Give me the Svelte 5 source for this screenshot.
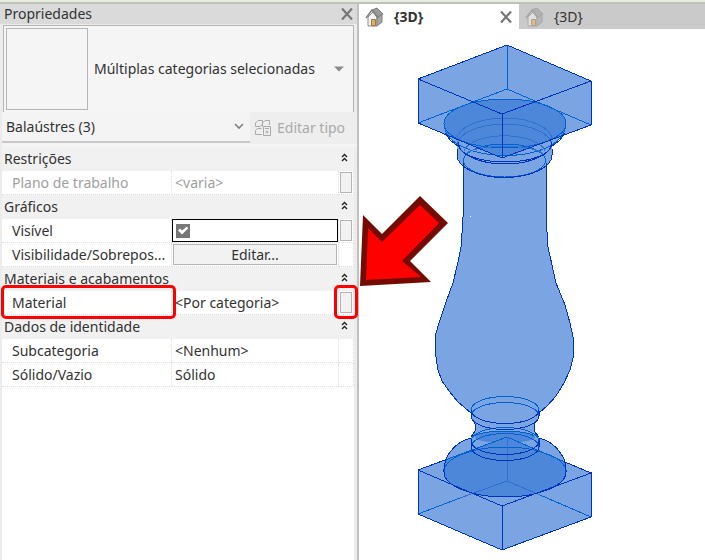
<script lang="ts">
    type Row = {
        name: string;
        value: string;
        kind?: "text" | "check" | "button";
        side?: boolean;
        muted?: boolean;
        marked?: boolean;
    };

    type Group = { title: string; rows: Row[] };

    const groups: Group[] = [
        {
            title: "Restrições",
            rows: [{ name: "Plano de trabalho", value: "<varia>", side: true, muted: true }],
        },
        {
            title: "Gráficos",
            rows: [
                { name: "Visível", value: "", kind: "check", side: true },
                { name: "Visibilidade/Sobrepos...", value: "Editar...", kind: "button" },
            ],
        },
        {
            title: "Materiais e acabamentos",
            rows: [{ name: "Material", value: "<Por categoria>", side: true, marked: true }],
        },
        {
            title: "Dados de identidade",
            rows: [
                { name: "Subcategoria", value: "<Nenhum>" },
                { name: "Sólido/Vazio", value: "Sólido" },
            ],
        },
    ];

    let visible = $state(true);
    let closed: Record<string, boolean> = $state({});

    function toggle(title: string): void {
        closed[title] = !closed[title];
    }
</script>

{#snippet cross()}
    <svg width="12" height="12" viewBox="0 0 12 12" aria-hidden="true">
        <path d="M1 0.500 L11 11.500 M11 0.500 L1 11.500" stroke="#777" stroke-width="2.200" />
    </svg>
{/snippet}

{#snippet house()}
    <svg width="20" height="20" viewBox="0 0 20 20" aria-hidden="true">
        <path d="M3 10 L8 5 L12 10 V19 H3 Z" fill="#f4f4f4" stroke="#8a8a8a" />
        <path d="M12 10 L17 7 V15 L12 19 Z" fill="#a6a6a6" stroke="#808080" />
        <path d="M7 3 L12 1 L18 7 L13 10 Z" fill="#9a9a9a" stroke="#808080" />
        <path d="M1 11 L7 3 L13 11" fill="none" stroke="#808080" stroke-width="1.500" />
        <path d="M6.500 18.500 V12.500 H10.500 V18.500 Z" fill="#f0b040" stroke="#8a7a60" />
    </svg>
{/snippet}

<div class="app">
    <section class="properties">
        <header>
            <h1>Propriedades</h1>
            <button class="close" aria-label="Fechar propriedades">{@render cross()}</button>
        </header>

        <div class="type-selector">
            <div class="preview"></div>
            <select aria-label="Tipo">
                <option>Múltiplas categorias selecionadas</option>
            </select>
            <svg class="caret" width="10" height="6" viewBox="0 0 10 6" aria-hidden="true">
                <path d="M0 0.500 H10 L5 5.500 Z" fill="#8b8b8b" />
            </svg>
        </div>

        <div class="filter">
            <div class="combo">
                <select aria-label="Filtro">
                    <option>Balaústres (3)</option>
                </select>
                <svg width="10" height="7" viewBox="0 0 10 7" aria-hidden="true">
                    <path d="M1 1 L5 5 L9 1" fill="none" stroke="#808080" stroke-width="1.600" />
                </svg>
            </div>
            <button class="edit-type" disabled>
                <svg width="17" height="17" viewBox="0 0 17 17" fill="none" stroke="#aaa" aria-hidden="true">
                    <path d="M0.500 6.500 V3 L3 0.500 H7.500 V4 L5.500 6.500 Z M7.500 4 V3 L10 0.500 H14.500 V5 M7.500 4 V6.500 M0.500 14.500 V10.500 L2.500 8.500 H6.500 M0.500 14.500 H7" />
                    <path d="M8.500 6.500 H15.500 V15.500 H8.500 Z M10 8.500 H14 M10.500 12 H13.500 M12 10.500 V13.500" />
                </svg>
                <span>Editar tipo</span>
            </button>
        </div>

        <div class="grid">
            <table>
                <colgroup>
                    <col class="col-name" />
                    <col />
                    <col class="col-side" />
                </colgroup>
                {#each groups as group (group.title)}
                    <tbody>
                        <tr class="group">
                            <th colspan="3" scope="rowgroup">
                                <div class="group-head">
                                    <span>{group.title}</span>
                                    <button aria-label={group.title} onclick={() => toggle(group.title)}>
                                        <svg width="7" height="9" viewBox="0 0 7 9" aria-hidden="true">
                                            <path d="M1 4 L3.500 1.500 L6 4 M1 8 L3.500 5.500 L6 8" fill="none" stroke="#222" stroke-width="1.400" />
                                        </svg>
                                    </button>
                                </div>
                            </th>
                        </tr>
                        {#if !closed[group.title]}
                            {#each group.rows as row (row.name)}
                                <tr class:muted={row.muted}>
                                    <th class="name" class:marked={row.marked} scope="row">{row.name}</th>
                                    {#if row.kind === "check"}
                                        <td class="value check">
                                            <label>
                                                <input type="checkbox" aria-label={row.name} bind:checked={visible} />
                                            </label>
                                        </td>
                                    {:else if row.kind === "button"}
                                        <td class="value action"><button>{row.value}</button></td>
                                    {:else}
                                        <td class="value">{row.value}</td>
                                    {/if}
                                    <td class="side" class:marked={row.marked}>
                                        {#if row.side}
                                            <button aria-label="Associar {row.name}"></button>
                                        {/if}
                                    </td>
                                </tr>
                            {/each}
                        {/if}
                    </tbody>
                {/each}
            </table>
        </div>
    </section>

    <main>
        <nav>
            <div class="tab active">
                <button class="tab-label">{@render house()}<span>{"{3D}"}</span></button>
                <button class="close" aria-label="Fechar vista">{@render cross()}</button>
            </div>
            <div class="tab">
                <button class="tab-label">{@render house()}<span>{"{3D}"}</span></button>
            </div>
        </nav>

        <svg class="view" viewBox="359 29 346 531" role="img" aria-label="Balaústre">
            <defs>
                <clipPath id="cap">
                    <path d="M418 79 L507 45 L591 81 V125 L502 158 L418 123 Z" />
                </clipPath>
                <clipPath id="plinth">
                    <path d="M418 470 L507 437 L591 473 V517 L502 550 L418 514 Z" />
                </clipPath>
            </defs>

            <!-- solids -->
            <g fill="#7ba4e2">
                <path d="M418 79 L507 45 L591 81 V125 L502 158 L418 123 Z" />
                <path d="M418 470 L507 437 L591 473 V517 L502 550 L418 514 Z" />
                <path d="M444 124 Q444 133 457 146 V155 Q458 162 463 166 V217 L462 233 L461 247 L458 262 L453 283 L446 302 L440 320 L436 333 L435 345 L436 357 L438 370 L442 381 L449 391 L458 402 L471 413 V417 L475 424 V431 L471 438 C458 441 443 454 444 472 A61 25 0 0 0 566 472 C567 454 552 441 539 438 L534 431 V424 L539 417 V413 L547 406 L556 396 L564 383 L570 370 L573 358 L574 347 L573 337 L570 323 L565 305 L556 283 L552 265 L548 247 L546 217 V166 Q551 162 552 155 V146 Q566 133 566 124 Z" />
            </g>
            <g fill="#4c87da">
                <path clip-path="url(#cap)" d="M444 123.500 A61 24.500 0 0 1 566 123.500 Q566 135 550 144 Q532 156 505 156 Q478 156 460 144 Q444 135 444 123.500 Z" />
                <path clip-path="url(#plinth)" d="M444 472 C443 454 458 441 471 438 L480 431 Q505 428 530 431 L539 438 C552 441 567 454 566 472 A61 25 0 0 1 444 472 Z" />
                <ellipse cx="505" cy="437" rx="30" ry="6" />
            </g>

            <!-- hidden edges -->
            <g class="hidden-edge" stroke="#0062d0">
                <path d="M507 45 V89 M418 123 L507 89 L591 125" />
                <path d="M418 514 L460 498 M591 517 L540 495" />
                <ellipse cx="505" cy="123.500" rx="61" ry="24.500" />
                <path d="M444 124 C446 165 563 167 566 124" />
                <ellipse cx="504.500" cy="160.500" rx="41" ry="16.500" />
                <ellipse cx="505" cy="410" rx="34" ry="13.500" />
                <path d="M471 416 A34 13.500 0 0 1 539 416" />
                <path d="M471 441 A34 13.500 0 0 1 539 441 M471 447 A34 13.500 0 0 1 539 447" />
                <path d="M475 436 A30 6 0 0 1 534 436" />
                <path d="M444 472 A61 25 0 0 1 566 472" />
                <path d="M445 460 L507 437 L565 462" />
            </g>
            <g class="hidden-edge" stroke="#2f70d0">
                <path d="M457 140 A47.500 22 0 0 1 552 140" />
                <path d="M457 146 A47.500 22 0 0 1 552 146" />
                <path d="M464 151 A41 18 0 0 1 545 151" />
                <path d="M466 154 A39 9 0 0 1 543 154" />
                <path d="M507 437 V481 M460 498 L507 481 L540 495" />
            </g>

            <!-- visible edges -->
            <g class="edge">
                <path d="M507 45 L591 81 L502 114 L418 79 Z M418 79 V123 L502 158 L591 125 V81 M502 114 V158" />
                <path d="M418 470 L445 460 M591 473 L565 462 M418 470 L502 506 L591 473 V517 L502 550 L418 514 V470 M502 506 V550" />
                <path d="M445 133 L450 140 L459 147 M565 133 L560 140 L551 147" />
                <path d="M459 145 A46 17 0 0 0 551 145" />
                <path d="M458 142 A47 22 0 0 0 552 142" />
                <path d="M457 149 V155 A47.500 22.500 0 0 0 552 155 V149" />
                <path d="M463 163 V217 L462 233 L461 247 L458 262 L453 283 L446 302 L440 320 L436 333 L435 345 L436 357 L438 370 L442 381 L449 391 L458 402 L471 413" />
                <path d="M546 163 V217 L548 247 L552 265 L556 283 L565 305 L570 323 L573 337 L574 347 L573 358 L570 370 L564 383 L556 396 L547 406 L539 413" />
                <path d="M471 410 A34 13.500 0 0 0 539 410 M471 411 V416 A34 13.500 0 0 0 539 416 V411" />
                <path d="M473 420 L475 424 V431 L471 437 M537 420 L534 424 V431 L539 437" />
                <path d="M471 439 V447 A34 13.500 0 0 0 539 447 V439 M471 441 A34 13.500 0 0 0 539 441" />
                <path d="M471 438 C458 441 443 454 444 472 A61 25 0 0 0 566 472 C567 454 552 441 539 438" />
            </g>
            <path d="M470 216 H471 V217 H470 Z" fill="#fff" />

            <!-- callout arrow -->
            <path d="M363 215 L382 234 L420 196 L448 223 L410 261 L431 282 L360 286 Z" fill="#740b00" />
            <path d="M368 228 L382 242 L420 205 L439 223 L402 261 L421 277 L366 280 Z" fill="#f00" />
        </svg>
    </main>
</div>

<style>
    :global(body) {
        margin: 0;
        background: #fff;
    }

    .app {
        display: grid;
        grid-template-columns: minmax(0, 359fr) minmax(0, 346fr);
        box-sizing: border-box;
        min-height: 100vh;
        border-top: 2px solid #e7eee0;
        background: #fff;
        font-family: "Noto Sans", "Open Sans", sans-serif;
        font-size: 14px;
        line-height: 20px;
        color: #333;
    }

    button,
    select {
        margin: 0;
        padding: 0;
        border: none;
        border-radius: 0;
        background: none;
        font: inherit;
        color: inherit;
    }

    svg {
        display: block;
        flex-shrink: 0;
    }

    .properties {
        display: flex;
        flex-direction: column;
        border-top: 2px solid #c0c0c0;
        border-right: 2px solid #c0c0c0;
        background: #ececec;
    }

    header {
        display: flex;
        align-items: center;
        justify-content: space-between;
        height: 20px;
        padding: 0 4px;
        background: #dadada;
    }

    h1 {
        margin: 0;
        font-size: 14px;
        font-weight: 400;
    }

    .close {
        display: flex;
    }

    .type-selector {
        display: flex;
        align-items: center;
        gap: 6px;
        margin: 1px 3px 0;
        padding: 2px 9px 2px 2px;
        border: 1px solid #b5b5b5;
        border-bottom: none;
        background: #f5f5f5;
    }

    .preview {
        box-sizing: border-box;
        flex-shrink: 0;
        width: 82px;
        height: 82px;
        border: 1px solid #b5b5b5;
    }

    select {
        appearance: none;
        flex: 1;
        min-width: 0;
        outline: none;
    }

    .filter {
        display: flex;
        margin-left: 2px;
        height: 35px;
        background: #f4f4f4;
    }

    .combo {
        display: flex;
        align-items: center;
        flex: 1;
        min-width: 0;
        height: 29px;
        padding: 0 6px 0 4px;
        border-bottom: 2px solid #c8c8c8;
    }

    .edit-type {
        display: flex;
        align-items: center;
        gap: 5px;
        width: 107px;
        height: 32px;
        padding: 0 5px;
        background: #eee;
        color: #aaa;
        white-space: nowrap;
    }

    .grid {
        flex: 1;
        margin: 0 3px 0 2px;
        background: #fff;
    }

    table {
        width: 100%;
        table-layout: fixed;
        border-spacing: 0;
    }

    .col-name {
        width: 48.3%;
    }

    .col-side {
        width: 15px;
    }

    th,
    td {
        box-sizing: border-box;
        height: 24px;
        padding: 0;
        font-weight: 400;
        text-align: left;
        white-space: nowrap;
    }

    .group th {
        background: #f1f1f1;
    }

    .group-head {
        display: flex;
        justify-content: space-between;
        padding: 0 6px 0 2px;
    }

    .group-head button {
        height: 16px;
    }

    .name,
    .value,
    .side {
        border-right: 1px dotted #ddd;
        border-bottom: 1px dotted #ddd;
    }

    .name {
        padding-left: 10px;
    }

    .value {
        padding-left: 3px;
    }

    .muted {
        color: #a0a0a0;
    }

    .check {
        padding: 0;
    }

    .check label {
        display: flex;
        align-items: center;
        box-sizing: border-box;
        height: 23px;
        padding: 0 3px;
        border: 1px solid #000;
    }

    .check input {
        appearance: none;
        width: 14px;
        height: 14px;
        margin: 0;
        background: #777;
    }

    .check input:checked::before {
        content: "";
        display: block;
        height: 14px;
        background: #fff;
        clip-path: polygon(2px 7px, 4px 5px, 6px 7px, 11px 3px, 12px 5px, 6px 11px);
    }

    .action {
        padding: 0 1px;
    }

    .action button {
        display: block;
        box-sizing: border-box;
        width: 100%;
        height: 21px;
        border: 1px solid #b5b5b5;
        background: #f2f2f2;
        line-height: 18px;
    }

    .side {
        padding-left: 1px;
    }

    .side button {
        display: block;
        box-sizing: border-box;
        width: 12px;
        height: 21px;
        border: 1px solid #b5b5b5;
        background: #f2f2f2;
    }

    .marked {
        position: relative;
    }

    .marked::after {
        content: "";
        position: absolute;
        inset: -6px -5px -5px -5px;
        border: 3px solid #f00;
        border-radius: 5px;
        pointer-events: none;
    }

    .name.marked::after {
        left: -1px;
    }

    nav {
        display: flex;
        height: 25px;
        border-top: 2px solid #c0c0c0;
        background: #cacaca;
    }

    .tab {
        display: flex;
        align-items: center;
        justify-content: space-between;
        flex: 0 1 160px;
        box-sizing: border-box;
        padding: 0 7px 0 6px;
    }

    .tab.active {
        background: #fff;
        font-weight: 700;
    }

    .tab-label {
        display: flex;
        align-items: center;
        gap: 9px;
    }

    .tab:not(.active) svg {
        opacity: 0.5;
    }

    .view {
        width: 100%;
        height: auto;
    }

    .edge,
    .hidden-edge {
        fill: none;
        stroke-width: 1;
        shape-rendering: crispEdges;
    }

    .edge {
        stroke: #0033bb;
    }
</style>
